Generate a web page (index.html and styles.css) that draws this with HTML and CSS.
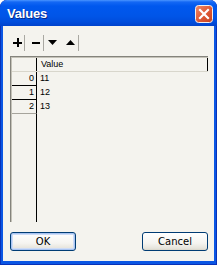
FILE: index.html
```html
<!DOCTYPE html>
<html>
<head>
<meta charset="utf-8">
<link rel="stylesheet" href="styles.css">
</head>
<body>
<div class="window">
  <div class="titlebar">
    <span class="title">Values</span>
    <span class="close">
      <svg width="18" height="18" viewBox="0 0 18 18">
        <defs>
          <linearGradient id="cg" x1="0" y1="0" x2="1" y2="1">
            <stop offset="0" stop-color="#EE8C6E"/>
            <stop offset="0.5" stop-color="#E05A36"/>
            <stop offset="1" stop-color="#C4401E"/>
          </linearGradient>
        </defs>
        <rect x="0.5" y="0.5" width="17" height="17" rx="3" fill="url(#cg)" stroke="#F4F0EE"/>
        <path d="M5 5 L13 13 M13 5 L5 13" stroke="#fff" stroke-width="2.2" stroke-linecap="square"/>
      </svg>
    </span>
  </div>
  <div class="client">
    <div class="toolbar">
      <span class="tb tb-plus"><svg width="9" height="9" viewBox="0 0 9 9"><rect x="0" y="4" width="9" height="2"/><rect x="4" y="0" width="2" height="9"/></svg></span>
      <span class="sep"></span>
      <span class="tb tb-minus"><svg width="8" height="2" viewBox="0 0 8 2"><rect x="0" y="0" width="8" height="2"/></svg></span>
      <span class="sep"></span>
      <span class="tb tb-down"><svg width="9" height="5" viewBox="0 0 9 5"><polygon points="0,0 9,0 4.5,5"/></svg></span>
      <span class="tb tb-up"><svg width="9" height="5" viewBox="0 0 9 5"><polygon points="0,5 9,5 4.5,0"/></svg></span>
      <span class="sep sep-last"></span>
    </div>
    <div class="grid">
      <div class="row head">
        <div class="rh"></div>
        <div class="val">Value</div>
      </div>
      <div class="row">
        <div class="rh rh-sel">0</div>
        <div class="val">11</div>
      </div>
      <div class="row">
        <div class="rh rh-sel">1</div>
        <div class="val">12</div>
      </div>
      <div class="row">
        <div class="rh rh-last">2</div>
        <div class="val">13</div>
      </div>
      <div class="row filler">
        <div class="rh"></div>
        <div class="val"></div>
      </div>
    </div>
    <div class="buttons">
      <button class="btn btn-default">OK</button>
      <button class="btn">Cancel</button>
    </div>
  </div>
</div>
</body>
</html>
```
FILE: styles.css
```css
html, body {
  margin: 0;
  padding: 0;
  background: #ffffff;
}

.window {
  width: 217px;
  height: 265px;
  display: flex;
  flex-direction: column;
  background: #0A56E4;
  box-shadow: inset 1px 0 #0831B8, inset -1px 0 #0831B8, inset 0 -1px #0831B8;
  border-radius: 7px 7px 0 0;
  overflow: hidden;
}

.titlebar {
  height: 26px;
  flex: none;
  display: flex;
  align-items: center;
  justify-content: space-between;
  padding: 0 4px 0 7px;
  background: linear-gradient(#4A95FF 0, #1468F4 2px, #0058EE 6px, #0055E8 16px, #004DDC 22px, #0043CC 26px);
  border-radius: 7px 7px 0 0;
}

.title {
  font-family: "Liberation Sans", Arial, sans-serif;
  font-weight: bold;
  font-size: 13px;
  color: #ffffff;
  text-shadow: 1px 1px 0 #0A2A8A;
  letter-spacing: -0.2px;
  margin-top: 1px;
}

.close {
  display: flex;
  width: 18px;
  height: 18px;
  margin-top: 1px;
}

.client {
  flex: 1;
  margin: 0 3px 4px 3px;
  background: #F4F3EE;
  padding: 7px 6px 10px 7px;
  display: flex;
  flex-direction: column;
}

.toolbar {
  height: 19px;
  flex: none;
  display: flex;
  align-items: center;
  margin-bottom: 4px;
}

.tb {
  display: flex;
  align-items: center;
}

.tb svg {
  fill: #000000;
}

.tb-plus {
  margin-left: 3px;
  margin-right: 2px;
}

.tb-minus {
  margin-left: 7px;
  margin-right: 3px;
}

.tb-down {
  margin-left: 4px;
}

.tb-up {
  margin-left: 9px;
  margin-right: 3px;
}

.sep {
  width: 1px;
  height: 16px;
  background: #A9A8A2;
}

.grid {
  height: 166px;
  flex: none;
  display: flex;
  flex-direction: column;
  border-top: 1px solid #84837C;
  border-left: 1px solid #84837C;
  box-shadow: inset 1px 1px 0 #C4C2B8;
  padding: 1px 0 0 1px;
  box-sizing: border-box;
  font-family: "Liberation Sans", Arial, sans-serif;
  font-size: 9px;
  color: #000000;
}

.row {
  display: flex;
  height: 14px;
  flex: none;
}

.row.head {
  height: 13px;
  border-bottom: 1px solid #D8D6CC;
}

.row.filler {
  flex: 1;
}

.rh {
  width: 25px;
  flex: none;
  border-right: 1px solid #000000;
  text-align: right;
  padding-right: 2px;
  box-sizing: border-box;
  line-height: 13px;
}

.rh-sel {
  border-bottom: 1px solid #000000;
}

.rh-last {
  border-bottom: 1px solid #A6A49C;
}

.val {
  flex: 1;
  padding-left: 3px;
  line-height: 13px;
}

.head .val {
  border-right: 1px solid #000000;
  padding-left: 4px;
}

.buttons {
  margin-top: 10px;
  display: flex;
  justify-content: space-between;
}

.btn {
  width: 66px;
  height: 19px;
  padding: 0;
  margin: 0;
  border: 1px solid #003C74;
  border-radius: 3px;
  background: linear-gradient(#FFFFFF 0, #F5F4F0 60%, #E6E4DC 90%, #D8D5C9 100%);
  font-family: "DejaVu Sans", Verdana, sans-serif;
  font-size: 10px;
  color: #000000;
}

.btn-default {
  box-shadow: inset 0 0 0 1px #A8C4F2, inset 0 0 0 2px #CEDCF6;
}
```
